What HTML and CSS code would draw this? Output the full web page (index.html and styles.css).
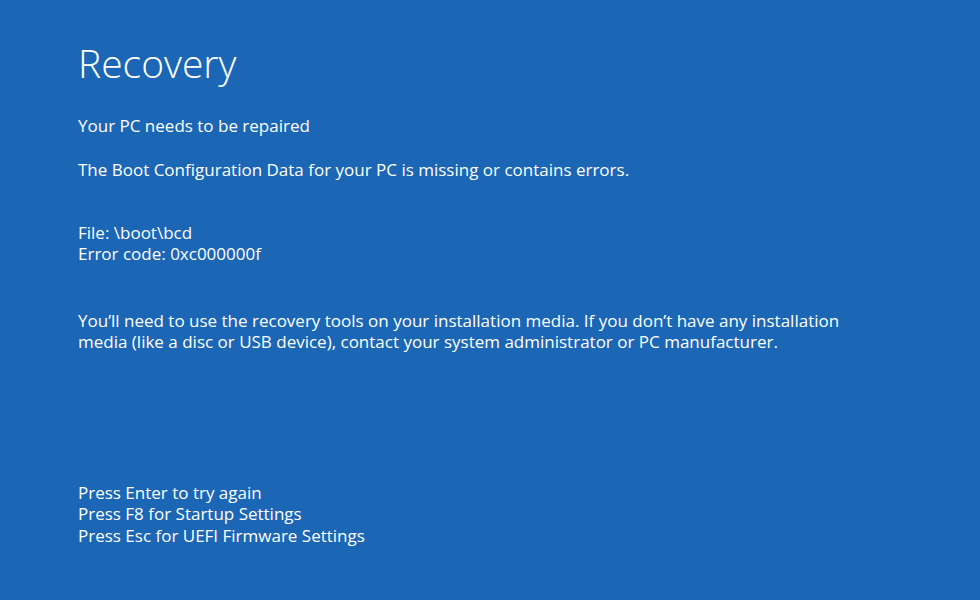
FILE: index.html
```html
<!DOCTYPE html>
<html lang="en">
<head>
<meta charset="utf-8">
<title>Recovery</title>
<link rel="stylesheet" href="styles.css">
</head>
<body>
<main class="screen">
  <h1 class="title">Recovery</h1>
  <p class="line status">Your PC needs to be repaired</p>
  <p class="line detail">The Boot Configuration Data for your PC is missing or contains errors.</p>
  <div class="block info">
    <p class="line">File: \boot\bcd</p>
    <p class="line">Error code: 0xc000000f</p>
  </div>
  <div class="block advice">
    <p class="line">You’ll need to use the recovery tools on your installation media. If you don’t have any installation<br>media (like a disc or USB device), contact your system administrator or PC manufacturer.</p>
  </div>
  <div class="block keys">
    <p class="line">Press Enter to try again</p>
    <p class="line">Press F8 for Startup Settings</p>
    <p class="line">Press Esc for UEFI Firmware Settings</p>
  </div>
</main>
</body>
</html>
```
FILE: styles.css
```css
html, body {
  margin: 0;
  padding: 0;
  height: 100%;
  background: #1b66b5;
}
.screen {
  box-sizing: border-box;
  height: 100%;
  padding: 43px 0 0 78px;
  color: #ffffff;
  font-family: "Open Sans", "Noto Sans", "Liberation Sans", sans-serif;
  font-size: 17px;
  line-height: 21.5px;
  display: flex;
  flex-direction: column;
}
.title {
  margin: 0;
  font-size: 39px;
  line-height: 39px;
  font-weight: 300;
}
.line {
  margin: 0;
  white-space: nowrap;
}
.status { margin-top: 32.5px; }
.detail { margin-top: 22.5px; }
.info { margin-top: 41.5px; }
.advice { margin-top: 45px; }
.keys { margin-top: 129px; }
```
